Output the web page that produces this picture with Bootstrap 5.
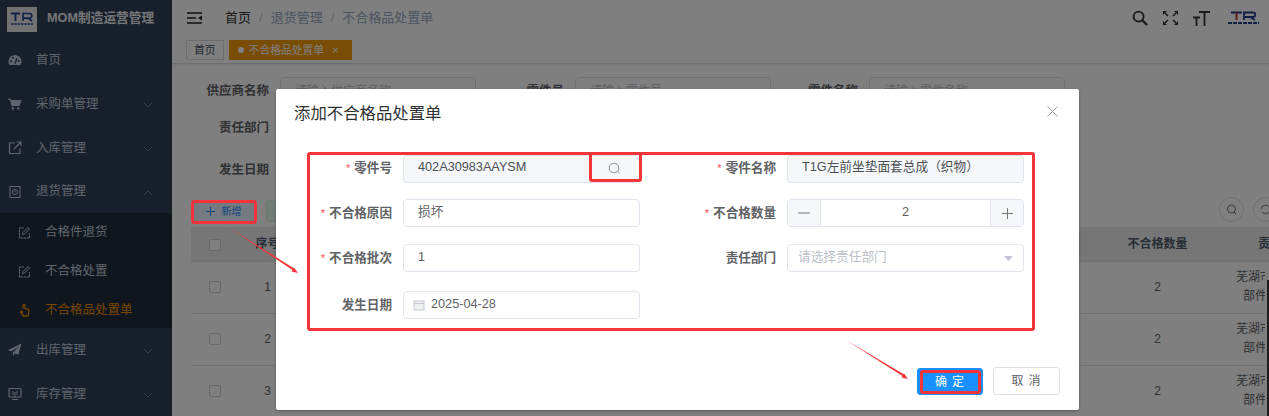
<!DOCTYPE html>
<html lang="zh">
<head>
<meta charset="utf-8">
<title>不合格品处置单</title>
<link href="https://cdn.jsdelivr.net/npm/bootstrap@5.3.0/dist/css/bootstrap.min.css" rel="stylesheet">
<style>
html,body{height:100%;overflow:hidden}
body{font-family:"Liberation Sans","Noto Sans CJK SC",sans-serif;font-size:12px;color:#606266;background:#fff}
.shell{width:1269px;height:416px;position:relative;overflow:hidden}
.side{width:172px;flex:none;background:#304156;color:#bfcbd9;font-size:12.5px}
.brand{height:38px;padding-left:7px;gap:10px;color:#e9edf2;font-weight:700;font-size:12.7px}
.brandlogo{width:30px;height:25px;background:#e4e4e4;display:flex;align-items:center;justify-content:center}
.mi{height:44px;padding-left:8px;position:relative}
.mi.short{height:43px}
.mi .ic{width:14px;height:14px;margin-right:14px;flex:none}
.mi .chev{position:absolute;left:143px;top:20px}
.subs{background:#1f2d3d;height:115px}
.si{height:39px;padding-left:18px}
.si .ic{width:13px;height:13px;margin-right:14px;flex:none}
.si.on{color:#f08c00}
.main{flex:1;min-width:0;overflow:hidden}
.topbar{height:36px;padding-left:15px;font-size:13px;color:#97a8be}
.topbar .cur{color:#303133;margin-left:23px}
.topbar .sep{margin:0 8px;color:#c0c4cc}
.tools{margin-left:auto;padding-right:10px;gap:14px}
.tagbar{height:28px;padding:4px 0 0 14px;gap:5px;border-bottom:1px solid #d8dce5;box-shadow:0 1px 3px rgba(0,0,0,.08);font-size:10.8px}
.tg{height:20px;padding:0 7px;border:1px solid #d8dce5;display:flex;align-items:center;color:#495060;white-space:nowrap}
.tg.act{background:#f59a0c;border-color:#f59a0c;color:#fff;padding:0 0 0 8px;width:123px}
.tg.act i{width:6px;height:6px;border-radius:50%;background:#fff;margin-right:5px}
.filters{padding:8px 0 0 19px;height:136px}
.frow{gap:0}
.fr1{height:38px}.fr2{height:36px}.fr3{height:48px}
.flabel{font-weight:700;font-size:12.5px;width:78px;text-align:right;flex:none;margin-right:11px;color:#606266;white-space:nowrap}
.flabel.lb2{width:38px}
.flabel.lb3{width:50px}
.fbox{width:196px;height:28px;border:1px solid #dcdfe6;border-radius:4px;flex:none;margin-right:50px;padding-left:14px;color:#c0c4cc}
.fbox.fb2{margin-right:37px}
.bgbar{height:27px;padding-left:19px;position:relative}
.btnadd{width:65px;height:22px;background:#e8f4ff;border:1px solid #d1e9ff;color:#1890ff;border-radius:3px;font-size:10px;padding:0;display:flex;align-items:center;justify-content:center;gap:7px}
.btngreen{width:65px;height:22px;background:#e7faf0;border:1px solid #d0f5e0;border-radius:3px;margin-left:10px}
.circ{width:25px;height:25px;border-radius:50%;border:1px solid #dcdfe6;flex:none;display:flex;align-items:center;justify-content:center}
.circs{position:absolute;left:1047px;top:-3px;gap:9px}
.tbwrap{margin-left:19px;width:1078px;overflow:hidden}
.tb{table-layout:fixed;width:1150px;margin:0;border-collapse:collapse;text-align:center;color:#606266;font-size:12px;--bs-table-bg:transparent}
.tb th{height:34px;background:#ececec;font-weight:700;border-bottom:1px solid #dfe6ec;vertical-align:middle;padding:0;color:#515a6e;white-space:nowrap}
.tb td{height:52px;border-bottom:1px solid #dfe6ec;vertical-align:middle;padding:0;line-height:19px}
.tb .ckcol{padding-right:2px}
.tb .lastth{text-align:left;padding-left:53px}
.cutcell{margin-left:31px;width:29px;overflow:hidden;white-space:nowrap;text-align:left}
.cutcell span{display:block}
.cutcell span+span{padding-left:7px}
.ck{display:inline-block;width:12px;height:12px;border:1px solid #cfd3da;border-radius:2px;background:#fff;vertical-align:middle}
.veil{position:absolute;inset:0;background:rgba(0,0,0,.5)}
.dlg{position:absolute;left:276px;top:89px;width:803px;height:321px;background:#fff;border-radius:2px;box-shadow:0 1px 3px rgba(0,0,0,.3)}
.dlgtitle{font-size:16.4px;color:#303133;position:absolute;left:18px;top:13px;line-height:22px}
.dlgclose{position:absolute;left:771px;top:17px}
.formgrid{position:absolute;left:20px;top:66px;display:grid;grid-template-columns:384px 384px}
.fitem{display:flex;align-items:flex-start;height:28px}
.r1{margin-bottom:16px}.r2{margin-bottom:17px}.r3{margin-bottom:19px}
.r1 .fl{line-height:26px}
.fl{width:96px;text-align:right;font-weight:700;font-size:12.6px;color:#606266;line-height:28px;margin-right:11px;flex:none;white-space:nowrap}
.fl b{color:#ff4d4f;font-weight:400;margin-right:4px;font-size:11px}
.fi{width:237px;height:28px;border:1px solid #dfe4ed;border-radius:4px;display:flex;align-items:center;padding-left:14px;font-size:12.7px;color:#606266;background:#fff;flex:none}
.fi.dis{background:#f5f7fa;color:#4c4f55;padding-bottom:2px}
.fi.ph{color:#bbbfc6;padding-left:10px;justify-content:space-between;padding-right:10px}
.fi.date{padding-left:9px}
.fi.date svg{margin-right:6px}
.srch{margin-left:auto;width:50px;height:100%;display:flex;align-items:center;justify-content:center;flex:none}
.num{padding:0;background:#fff;justify-content:space-between}
.numbtn{width:33px;height:100%;background:#f5f7fa;display:flex;align-items:center;justify-content:center;flex:none}
.numbtn.l{border-right:1px solid #dfe4ed;border-radius:3px 0 0 3px}
.numbtn.r{border-left:1px solid #dfe4ed;border-radius:0 3px 3px 0}
.footbtns{position:absolute;left:641px;top:278px;gap:10px}
.bok{width:66px;height:27px;margin-top:1px;background:#1890ff;border:1px solid #1890ff;color:#fff;font-size:12px;letter-spacing:5px;padding:0 0 0 4px;border-radius:3px}
.bno{width:67px;height:28px;background:#fff;border:1px solid #dcdfe6;color:#606266;font-size:12px;letter-spacing:5px;padding:0 0 0 4px;border-radius:3px}
.rbox{position:absolute;border:3px solid #f5343a;border-radius:3px;pointer-events:none}
.rb1{left:191px;top:200px;width:66px;height:24px}
.rb2{left:307px;top:152px;width:728px;height:179px}
.rb3{left:589px;top:152px;width:53px;height:30px}
.rb4{left:920px;top:370px;width:61px;height:24px}
.arrows{position:absolute;left:0;top:0}
.sbar{position:absolute;left:1267px;top:280px;width:2px;height:136px;background:#3a3a3a}
</style>
</head>
<body>
<div class="shell d-flex">
  <aside class="side">
    <div class="brand d-flex align-items-center">
      <span class="brandlogo"><svg width="24" height="14" viewBox="0 0 24 14"><path d="M1 1.500h9M5.500 1.500v7.500" stroke="#1f3f8f" stroke-width="1.800" fill="none"/><path d="M13 9V1.500h6.500a2.200 2.200 0 0 1 0 4.600H13M18 6l4 3" stroke="#1f3f8f" stroke-width="1.600" fill="none"/><path d="M1 12h22" stroke="#1f3f8f" stroke-width="1.400" stroke-dasharray="2.500 .8"/></svg></span>
      <span>MOM制造运营管理</span>
    </div>
    <div class="mi d-flex align-items-center"><svg class="ic" viewBox="0 0 14 14"><path d="M1.500 12a6.500 6.500 0 1 1 11 0z" fill="#bfcbd9"/><path d="M7 10.500l2-5.500" stroke="#304156" stroke-width="1.400"/><circle cx="3.200" cy="8" r="1" fill="#304156"/><circle cx="5" cy="4.800" r="1" fill="#304156"/><circle cx="10.800" cy="8" r="1" fill="#304156"/></svg><span>首页</span></div>
    <div class="mi d-flex align-items-center"><svg class="ic" viewBox="0 0 14 14"><path d="M0 2h2.400l1.400 6.500h7.400L13 3.500H3" fill="#bfcbd9" stroke="#bfcbd9"/><circle cx="4.800" cy="11.500" r="1.300" fill="#bfcbd9"/><circle cx="10.200" cy="11.500" r="1.300" fill="#bfcbd9"/></svg><span>采购单管理</span><svg class="chev" width="10" height="6" viewBox="0 0 10 6"><path d="M1 1l4 4 4-4" fill="none" stroke="#6f7c8c"/></svg></div>
    <div class="mi d-flex align-items-center"><svg class="ic" viewBox="0 0 14 14"><path d="M7 2H1.500v10.500H12V7.500M6 8l7-7M9 1h4v4" fill="none" stroke="#bfcbd9" stroke-width="1.200"/></svg><span>入库管理</span><svg class="chev" width="10" height="6" viewBox="0 0 10 6"><path d="M1 1l4 4 4-4" fill="none" stroke="#6f7c8c"/></svg></div>
    <div class="mi short d-flex align-items-center"><svg class="ic" viewBox="0 0 14 14"><rect x="2" y="1.500" width="10" height="11" fill="none" stroke="#bfcbd9"/><circle cx="7" cy="7" r="2.600" fill="none" stroke="#bfcbd9"/><path d="M7 5.600V7h1.200" stroke="#bfcbd9" fill="none" stroke-width=".8"/></svg><span>退货管理</span><svg class="chev" width="10" height="6" viewBox="0 0 10 6"><path d="M1 5l4-4 4 4" fill="none" stroke="#6f7c8c"/></svg></div>
    <div class="subs">
      <div class="si d-flex align-items-center"><svg class="ic" viewBox="0 0 13 13"><path d="M6 2H1.500v10h10V7" fill="none" stroke="#bfcbd9" stroke-width="1.100" stroke-dasharray="2.500 .6"/><path d="M4.500 8.500L5 6.500 10 1.500l1.500 1.500-5 5z" fill="none" stroke="#bfcbd9"/></svg><span>合格件退货</span></div>
      <div class="si d-flex align-items-center"><svg class="ic" viewBox="0 0 13 13"><path d="M6 2H1.500v10h10V7" fill="none" stroke="#bfcbd9" stroke-width="1.100" stroke-dasharray="2.500 .6"/><path d="M4.500 8.500L5 6.500 10 1.500l1.500 1.500-5 5z" fill="none" stroke="#bfcbd9"/></svg><span>不合格处置</span></div>
      <div class="si on d-flex align-items-center"><svg class="ic" viewBox="0 0 13 13"><path d="M5 4.500V1.500a1 1 0 0 1 2 0v3l3 .7c1 .3 1.200 1 1 2L10 12H5.500L2.500 8l1-.8L5 8.500" fill="none" stroke="#f08c00" stroke-width="1.300"/></svg><span>不合格品处置单</span></div>
    </div>
    <div class="mi d-flex align-items-center"><svg class="ic" viewBox="0 0 14 14"><path d="M13.500 .5L0 7l3.500 1.500L11 3 5 9.500V13l2.300-2.500 3 1.300z" fill="#bfcbd9"/></svg><span>出库管理</span><svg class="chev" width="10" height="6" viewBox="0 0 10 6"><path d="M1 1l4 4 4-4" fill="none" stroke="#6f7c8c"/></svg></div>
    <div class="mi d-flex align-items-center"><svg class="ic" viewBox="0 0 14 14"><rect x="1" y="1.500" width="12" height="8.500" rx="1" fill="none" stroke="#bfcbd9" stroke-width="1.200"/><path d="M5 4v4M7 5v6M9 4v4M4 12.500h6" stroke="#bfcbd9"/></svg><span>库存管理</span><svg class="chev" width="10" height="6" viewBox="0 0 10 6"><path d="M1 1l4 4 4-4" fill="none" stroke="#6f7c8c"/></svg></div>
  </aside>
  <div class="main">
    <div class="topbar d-flex align-items-center">
      <svg width="15" height="12" viewBox="0 0 15 12"><path d="M0 1h15M0 6h9M0 11h15" stroke="#222" stroke-width="1.500"/><path d="M15 3.500v5L11 6z" fill="#222"/></svg>
      <span class="cur">首页</span><span class="sep">/</span><span>退货管理</span><span class="sep">/</span><span>不合格品处置单</span>
      <div class="tools d-flex align-items-center">
        <svg width="16" height="16" viewBox="0 0 17 17"><circle cx="7" cy="7" r="5.300" fill="none" stroke="#333" stroke-width="2"/><path d="M11 11l5 5" stroke="#333" stroke-width="2.400"/></svg>
        <svg width="17" height="16" viewBox="0 0 17 16"><path d="M1 1h4L1 5zM16 1h-4l4 4zM1 15h4l-4-4zM16 15h-4l4-4z" fill="#333"/><path d="M3 3l3 3M14 3l-3 3M3 13l3-3M14 13l-3-3" stroke="#333" stroke-width="1.500"/></svg>
        <svg width="17" height="16" viewBox="0 0 17 16"><path d="M6 2h11M11.500 2v14M0 7.500h7M3.500 7.500V16" stroke="#333" stroke-width="1.800" fill="none"/></svg>
        <svg class="ms-1" width="31" height="14" viewBox="0 0 31 14"><path d="M3 1.500h11" stroke="#1f3f8f" stroke-width="2" fill="none"/><path d="M8.500 1.500v7.500" stroke="#c0303a" stroke-width="2" fill="none"/><path d="M16 9V1.500h9a2.200 2.200 0 0 1 0 4.500h-9M22 6l5 3" stroke="#1f3f8f" stroke-width="1.800" fill="none"/><path d="M0 12h31" stroke="#1f3f8f" stroke-width="1.800" stroke-dasharray="4 1"/></svg>
      </div>
    </div>
    <div class="tagbar d-flex"><span class="tg">首页</span><span class="tg act"><i></i>不合格品处置单<span class="ms-2">×</span></span></div>
    <div class="filters">
      <div class="frow fr1 d-flex align-items-center">
        <span class="flabel">供应商名称</span><span class="fbox d-flex align-items-center">请输入供应商名称</span>
        <span class="flabel lb2">零件号</span><span class="fbox fb2 d-flex align-items-center">请输入零件号</span>
        <span class="flabel lb3">零件名称</span><span class="fbox d-flex align-items-center">请输入零件名称</span>
      </div>
      <div class="frow fr2 d-flex align-items-center"><span class="flabel">责任部门</span></div>
      <div class="frow fr3 d-flex align-items-center"><span class="flabel">发生日期</span></div>
    </div>
    <div class="bgbar d-flex align-items-start">
      <button class="btn btnadd" type="button"><svg width="9" height="9" viewBox="0 0 9 9"><path d="M4.500 0v9M0 4.500h9" stroke="#1890ff"/></svg>新增</button><span class="btngreen"></span>
      <div class="circs d-flex"><span class="circ"><svg width="11" height="11" viewBox="0 0 11 11"><circle cx="5.500" cy="5" r="4" fill="none" stroke="#777"/><path d="M8 8l2 2" stroke="#777"/></svg></span><span class="circ"><svg width="11" height="11" viewBox="0 0 11 11"><path d="M1 5a4.500 4.500 0 0 1 8-2M10 6a4.500 4.500 0 0 1-8 2" fill="none" stroke="#777"/></svg></span></div>
    </div>
    <div class="tbwrap">
      <table class="table tb">
        <colgroup><col style="width:49px"><col style="width:55px"><col style="width:815px"><col style="width:95px"><col style="width:136px"></colgroup>
        <thead><tr><th class="ckcol"><span class="ck"></span></th><th>序号</th><th></th><th>不合格数量</th><th class="lastth">责任部门</th></tr></thead>
        <tbody>
          <tr><td class="ckcol"><span class="ck"></span></td><td>1</td><td></td><td>2</td><td><div class="cutcell"><span>芜湖市</span><span>部件</span></div></td></tr>
          <tr><td class="ckcol"><span class="ck"></span></td><td>2</td><td></td><td>2</td><td><div class="cutcell"><span>芜湖市</span><span>部件</span></div></td></tr>
          <tr><td class="ckcol"><span class="ck"></span></td><td>3</td><td></td><td>2</td><td><div class="cutcell"><span>芜湖市</span><span>部件</span></div></td></tr>
        </tbody>
      </table>
    </div>
  </div>
  <div class="sbar"></div>
  <div class="veil"></div>
  <div class="dlg" role="dialog">
    <div class="dlgtitle">添加不合格品处置单</div>
    <svg class="dlgclose" width="11" height="11" viewBox="0 0 11 11"><path d="M.5.5l10 10M10.500.5l-10 10" stroke="#9a9da3"/></svg>
    <div class="formgrid">
      <div class="fitem r1"><span class="fl"><b>*</b>零件号</span><div class="fi dis">402A30983AAYSM<span class="srch"><svg width="13" height="13" viewBox="0 0 13 13"><circle cx="6" cy="6" r="4.800" fill="none" stroke="#8a8d93"/><path d="M9.500 9.500l2 1.500" stroke="#8a8d93"/></svg></span></div></div>
      <div class="fitem r1"><span class="fl"><b>*</b>零件名称</span><div class="fi dis">T1G左前坐垫面套总成（织物）</div></div>
      <div class="fitem r2"><span class="fl"><b>*</b>不合格原因</span><div class="fi">损坏</div></div>
      <div class="fitem r2"><span class="fl"><b>*</b>不合格数量</span><div class="fi num"><span class="numbtn l"><svg width="12" height="2" viewBox="0 0 12 2"><path d="M0 1h12" stroke="#777"/></svg></span><span>2</span><span class="numbtn r"><svg width="11" height="11" viewBox="0 0 11 11"><path d="M0 5.500h11M5.500 0v11" stroke="#777"/></svg></span></div></div>
      <div class="fitem r3"><span class="fl"><b>*</b>不合格批次</span><div class="fi">1</div></div>
      <div class="fitem r3"><span class="fl">责任部门</span><div class="fi ph"><span>请选择责任部门</span><svg width="9" height="5" viewBox="0 0 9 5"><path d="M0 0h9L4.500 5z" fill="#c0c4cc"/></svg></div></div>
      <div class="fitem"><span class="fl">发生日期</span><div class="fi date"><svg width="12" height="12" viewBox="0 0 12 12"><rect x="1" y="2" width="10" height="9" fill="#eef0f3" stroke="#c5c8ce"/><path d="M1 4.500h10" stroke="#c5c8ce"/></svg>2025-04-28</div></div>
    </div>
    <div class="footbtns d-flex align-items-start">
      <button class="btn bok" type="button">确定</button>
      <button class="btn bno" type="button">取消</button>
    </div>
  </div>
  <div class="rbox rb1"></div>
  <div class="rbox rb2"></div>
  <div class="rbox rb3"></div>
  <div class="rbox rb4"></div>
  <svg class="arrows" width="1269" height="416" viewBox="0 0 1269 416">
    <path d="M228 227L295 269L294 271z" fill="#f5343a"/><path d="M298 273l-6.500-1.500 2.500-4z" fill="#f5343a"/>
    <path d="M846 340L905 375L904 377z" fill="#f5343a"/><path d="M908 379l-6.500-1.500 2.500-4z" fill="#f5343a"/>
  </svg>
</div>
<script src="https://cdn.jsdelivr.net/npm/bootstrap@5.3.0/dist/js/bootstrap.bundle.min.js"></script>
</body>
</html>
